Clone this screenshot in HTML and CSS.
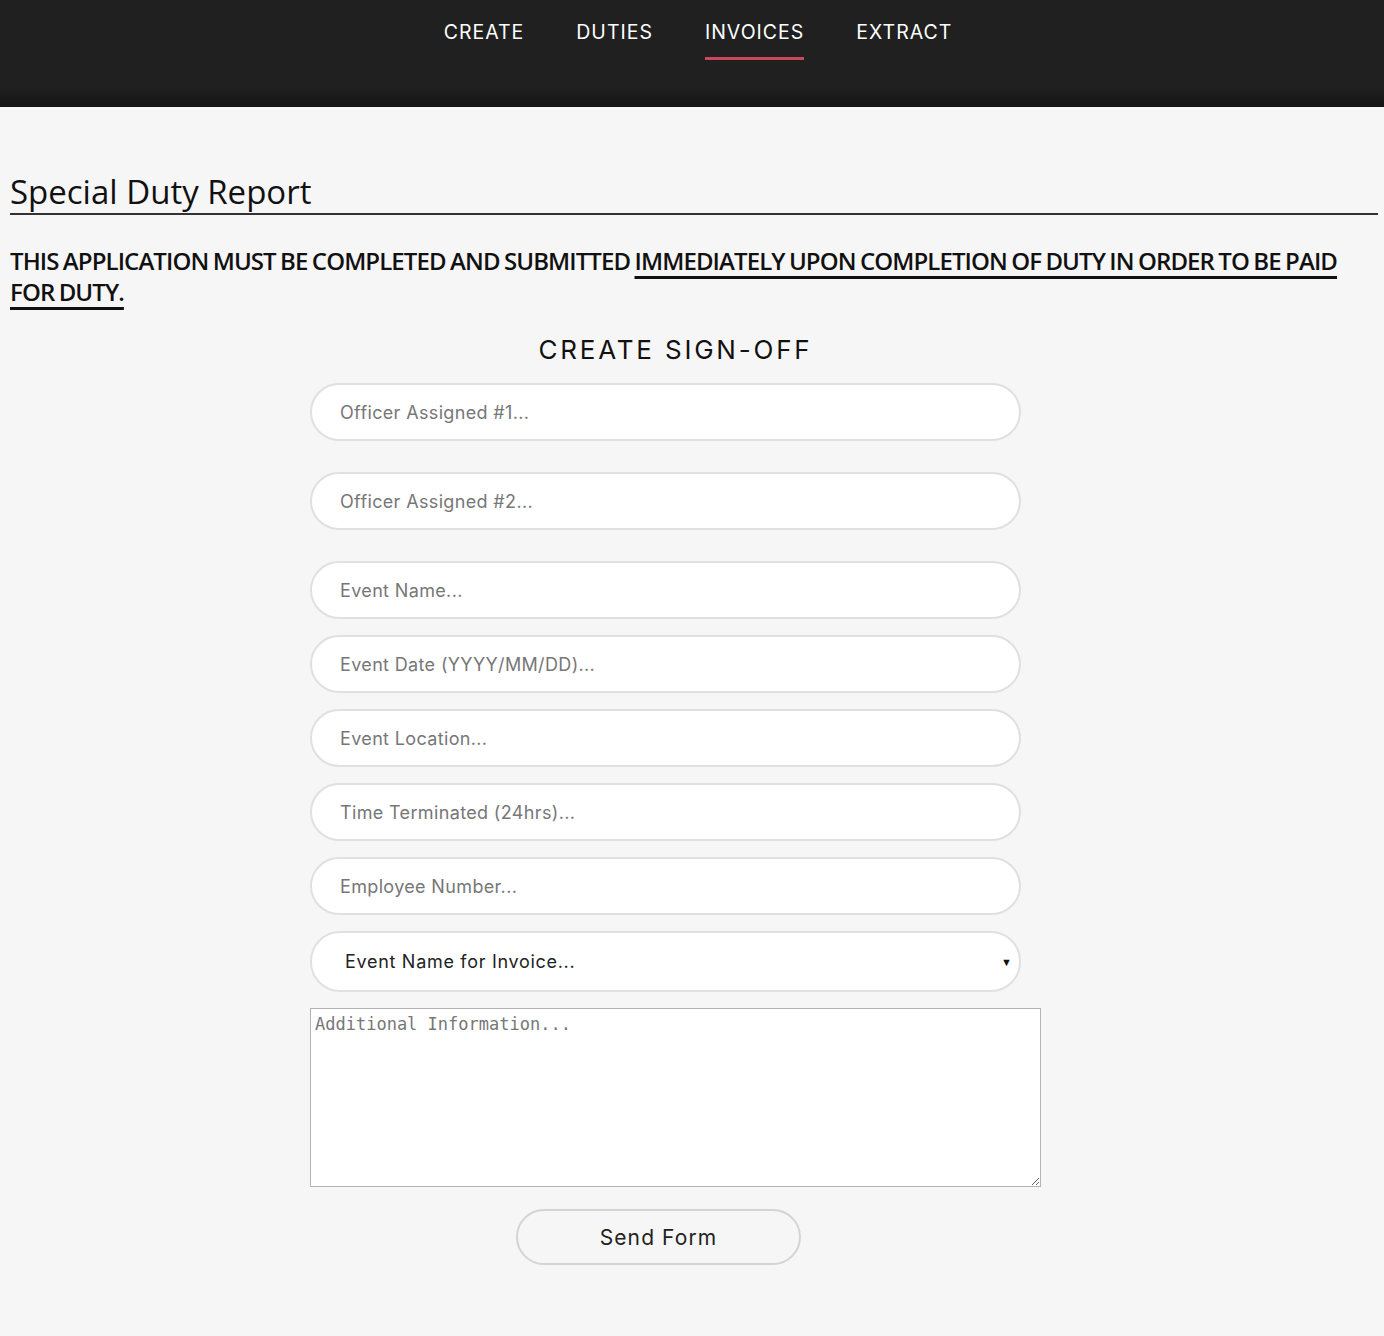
FILE: index.html
```html
<!DOCTYPE html>
<html lang="en">
<head>
<meta charset="utf-8">
<title>Special Duty Report</title>
<link rel="stylesheet" href="styles.css">
</head>
<body>
<header class="topbar">
  <nav class="nav">
    <a class="nav-link" href="#">CREATE</a>
    <a class="nav-link" href="#">DUTIES</a>
    <a class="nav-link active" href="#">INVOICES</a>
    <a class="nav-link" href="#">EXTRACT</a>
  </nav>
</header>
<main class="page">
  <h1 class="title">Special Duty Report</h1>
  <p class="notice">THIS APPLICATION MUST BE COMPLETED AND SUBMITTED <u>IMMEDIATELY UPON COMPLETION OF DUTY IN ORDER TO BE PAID</u> <u>FOR DUTY.</u></p>
  <form class="form">
    <h2 class="form-title">CREATE SIGN-OFF</h2>
    <input class="field gap-lg" type="text" placeholder="Officer Assigned #1...">
    <input class="field gap-lg" type="text" placeholder="Officer Assigned #2...">
    <input class="field" type="text" placeholder="Event Name...">
    <input class="field" type="text" placeholder="Event Date (YYYY/MM/DD)...">
    <input class="field" type="text" placeholder="Event Location...">
    <input class="field" type="text" placeholder="Time Terminated (24hrs)...">
    <input class="field" type="text" placeholder="Employee Number...">
    <div class="select-wrap">
      <select class="select">
        <option>Event Name for Invoice...</option>
      </select>
      <span class="arrow">▼</span>
    </div>
    <textarea class="notes" placeholder="Additional Information..."></textarea>
    <button class="send" type="button">Send Form</button>
  </form>
</main>
</body>
</html>
```
FILE: styles.css
```css
* { box-sizing: border-box; }
html, body { margin: 0; padding: 0; }
body {
  background: #f6f6f6;
  color: #111;
  font-family: "Open Sans", "Liberation Sans", sans-serif;
  min-height: 1336px;
}
.topbar {
  height: 107px;
  background: linear-gradient(to bottom, #202020 0, #202020 88px, #141414 107px);
}
.nav {
  display: flex;
  justify-content: center;
  gap: 52px;
  padding-top: 20px;
  padding-left: 12px;
}
.nav-link {
  color: #fff;
  text-decoration: none;
  font-family: "Inter", "Open Sans", sans-serif;
  font-size: 19.5px;
  letter-spacing: 1px;
  line-height: 25px;
  padding-bottom: 12px;
  border-bottom: 3px solid transparent;
}
.nav-link.active { border-bottom-color: #c9485c; }
.page {
  padding: 0 6px 60px 10px;
}
.title {
  margin: 0;
  padding-top: 66px;
  font-weight: 400;
  font-size: 33px;
  line-height: 38px;
  padding-bottom: 2px;
  border-bottom: 2px solid #333;
  letter-spacing: 0;
}
.notice {
  margin: 30px 0 0 0;
  font-weight: 600;
  font-size: 24px;
  line-height: 31px;
  letter-spacing: -0.9px;
  word-spacing: -1px;
}
.notice u {
  text-decoration-thickness: 3px;
  text-underline-offset: 6px;
}
.form {
  width: 731px;
  margin: 24px 0 0 300px;
  display: flex;
  flex-direction: column;
  align-items: flex-start;
}
.form-title {
  align-self: stretch;
  text-align: center;
  margin: 0 0 14px 0;
  font-family: "Inter", "Open Sans", sans-serif;
  font-weight: 400;
  font-size: 26px;
  line-height: 38px;
  letter-spacing: 2.8px;
}
.field {
  width: 711px;
  height: 58px;
  border: 2px solid #e0e0e0;
  border-radius: 29px;
  background: #fff;
  padding: 0 0 0 28px;
  font-family: "Inter", "Open Sans", sans-serif;
  font-size: 18px;
  color: #222;
  margin-bottom: 16px;
  outline: none;
}
.field.gap-lg { margin-bottom: 31px; }
.field::placeholder { color: #777; letter-spacing: 0.35px; }
.select-wrap {
  position: relative;
  width: 711px;
  height: 61px;
  margin-bottom: 16px;
}
.select {
  appearance: none;
  -webkit-appearance: none;
  width: 100%;
  height: 100%;
  border: 2px solid #e0e0e0;
  border-radius: 30px;
  background: #fff;
  padding: 0 0 0 33px;
  font-family: "Inter", "Open Sans", sans-serif;
  font-size: 18px;
  letter-spacing: 0.7px;
  color: #222;
  outline: none;
}
.arrow {
  position: absolute;
  right: 9px;
  top: 23px;
  font-size: 11px;
  color: #111;
  pointer-events: none;
}
.notes {
  width: 731px;
  height: 179px;
  border: 1px solid #b4b4b4;
  background: #fff;
  padding: 4px 4px;
  font-family: "DejaVu Sans Mono", "Liberation Mono", monospace;
  font-size: 17px;
  line-height: 22px;
  resize: vertical;
  margin-bottom: 22px;
}
.notes::placeholder { color: #777; }
.send {
  margin-left: 206px;
  width: 285px;
  height: 56px;
  border: 2px solid #d4d4d4;
  border-radius: 28px;
  background: #f6f6f6;
  font-family: "Inter", "Open Sans", sans-serif;
  font-size: 21px;
  color: #222;
  letter-spacing: 1.1px;
}
```
